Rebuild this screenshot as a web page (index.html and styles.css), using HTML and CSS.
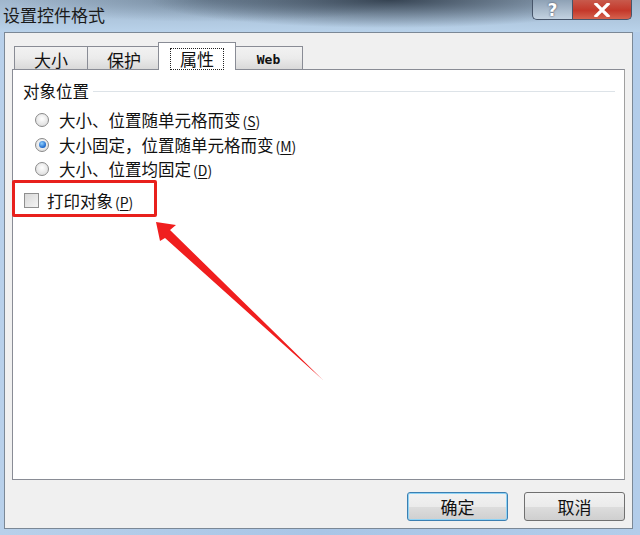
FILE: index.html
```html
<!DOCTYPE html>
<html lang="zh-CN">
<head>
    <meta charset="UTF-8">
    <title>设置控件格式</title>
    <link rel="stylesheet" href="styles.css">
</head>
<body>

<div class="window">
    <div class="titlebar">
        <span class="title">设置控件格式</span>
        <div class="caption-buttons">
            <button class="cap-btn help">?</button>
            <button class="cap-btn close">
                <svg width="18" height="14" viewBox="0 0 18 14">
                    <path d="M3 1 L15 13 M15 1 L3 13" stroke="#fff" stroke-width="3.2" stroke-linecap="square"/>
                </svg>
            </button>
        </div>
    </div>

    <div class="client">
        <div class="tabs">
            <div class="tab">大小</div>
            <div class="tab">保护</div>
            <div class="tab active"><span class="focus">属性</span></div>
            <div class="tab web">Web</div>
        </div>

        <div class="panel">
            <div class="group-title">
                <span>对象位置</span>
                <span class="group-line"></span>
            </div>

            <div class="options">
                <div class="option">
                    <span class="radio"></span>
                    <span>大小、位置随单元格而变<span class="key">(<u>S</u>)</span></span>
                </div>
                <div class="option">
                    <span class="radio checked"></span>
                    <span>大小固定，位置随单元格而变<span class="key">(<u>M</u>)</span></span>
                </div>
                <div class="option">
                    <span class="radio"></span>
                    <span>大小、位置均固定<span class="key">(<u>D</u>)</span></span>
                </div>
            </div>

            <div class="check-row">
                <span class="checkbox"></span>
                <span>打印对象<span class="key">(<u>P</u>)</span></span>
            </div>

            <!-- annotation drawn over the dialog -->
            <div class="highlight"></div>
            <svg class="arrow" width="200" height="200" viewBox="0 0 200 200">
                <path d="M1 1 L21 4 L15 9 L167 158 L168 159 L10 17 L5 20 Z" fill="#f01e1e"/>
            </svg>
        </div>

        <div class="buttons">
            <button class="btn default">确定</button>
            <button class="btn">取消</button>
        </div>
    </div>
</div>

</body>
</html>
```

FILE: styles.css
```css
body {
    margin: 0;
    font-family: "Noto Sans CJK SC", "Liberation Sans", sans-serif;
    background: #ffffff;
}
.window {
    width: 640px;
    height: 535px;
    background: linear-gradient(to right, #b8d0ea, #a9c5e6 50%, #b3cdea);
    overflow: hidden;
}
.titlebar {
    height: 32px;
    display: flex;
    justify-content: space-between;
    background:
        radial-gradient(ellipse 240px 28px at 390px 0px, rgba(36, 48, 62, 0.85), rgba(36, 48, 62, 0) 100%),
        radial-gradient(ellipse 200px 22px at 210px 0px, rgba(90, 110, 130, 0.6), rgba(90, 110, 130, 0) 100%),
        linear-gradient(to bottom, #a0b6cc, #b9d2ea);
}
.title {
    font-size: 17px;
    color: #1a1a1a;
    padding: 2px 0 0 3px;
    line-height: 26px;
}
.caption-buttons {
    display: flex;
    margin-right: 8px;
    height: 20px;
}
.cap-btn {
    height: 20px;
    border: 1px solid #47556a;
    border-top: none;
    padding: 0;
    display: flex;
    align-items: center;
    justify-content: center;
}
.help {
    width: 40px;
    border-radius: 0 0 0 5px;
    border-right: none;
    background: linear-gradient(to bottom, #8ea1b5, #c3d2e1);
    color: #fff;
    font-family: "DejaVu Sans", sans-serif;
    font-weight: bold;
    font-size: 17px;
    text-shadow: 0 0 2px #334;
}
.close {
    width: 60px;
    border-radius: 0 0 5px 0;
    background: linear-gradient(to bottom, #c85a4c, #c4382a 55%, #d5634f);
}
.client {
    margin-left: 4px;
    width: 629px;
    height: 497px;
    box-sizing: border-box;
    border: 1px solid #7b8896;
    background: #f0f0f0;
    padding: 9px 7px 0 7px;
}
.tabs {
    display: flex;
    align-items: flex-end;
    height: 28px;
    padding-left: 2px;
    margin-bottom: -1px;
    position: relative;
    z-index: 1;
}
.tab {
    width: 73px;
    height: 24px;
    box-sizing: border-box;
    border: 1px solid #898c95;
    border-right: none;
    background: linear-gradient(to bottom, #f2f2f2, #ebebeb 50%, #d9d9d9);
    font-size: 17px;
    line-height: 25px;
    text-align: center;
    color: #111;
}
.tab.web {
    width: 69px;
    border-right: 1px solid #898c95;
    font-family: "DejaVu Sans Mono", monospace;
    font-weight: bold;
    font-size: 13px;
}
.tab.active {
    width: 78px;
    height: 28px;
    margin: 0 -2px 0 -2px;
    border-right: 1px solid #898c95;
    border-bottom: none;
    background: #ffffff;
    padding-top: 3px;
    position: relative;
}
.focus {
    display: inline-block;
    border: 1px dotted #222;
    line-height: 20px;
    padding: 0 9px;
}
.panel {
    position: relative;
    height: 411px;
    box-sizing: border-box;
    border: 1px solid #898c95;
    border-right-color: #a0a0a0;
    background: #ffffff;
    padding: 10px 9px 0 10px;
    font-size: 16.5px;
    color: #111;
}
.group-title {
    display: flex;
    align-items: center;
    height: 22px;
}
.group-line {
    flex: 1;
    height: 0;
    border-top: 1px solid #dde3e8;
    margin-left: 4px;
}
.options {
    margin-top: 6px;
}
.option {
    display: flex;
    align-items: center;
    height: 24.5px;
    padding-left: 12px;
}
.radio {
    width: 14px;
    height: 14px;
    box-sizing: border-box;
    border-radius: 50%;
    border: 1px solid #8a8a8a;
    background: radial-gradient(circle at 50% 40%, #ffffff, #d6d6d6);
    margin-right: 10px;
    position: relative;
}
.radio.checked::after {
    content: "";
    position: absolute;
    left: 2.5px;
    top: 2.5px;
    width: 7px;
    height: 7px;
    border-radius: 50%;
    background: radial-gradient(circle at 40% 35%, #8fd0ff, #1b66c9 70%);
}
.key {
    font-size: 14px;
    margin-left: 2px;
}
.key u {
    text-underline-offset: 2px;
}
.check-row {
    display: flex;
    align-items: center;
    height: 30px;
    margin-top: 4px;
    padding-left: 1px;
}
.checkbox {
    width: 15px;
    height: 15px;
    box-sizing: border-box;
    border: 1px solid #8f8f8f;
    background: linear-gradient(135deg, #d8d8d8, #f4f4f4);
    margin-right: 8px;
}
.highlight {
    position: absolute;
    left: -1px;
    top: 110px;
    width: 145px;
    height: 37px;
    box-sizing: border-box;
    border: 3px solid #e8201c;
    border-radius: 2px;
}
.arrow {
    position: absolute;
    left: 142px;
    top: 151px;
}
.buttons {
    display: flex;
    justify-content: flex-end;
    gap: 16px;
    padding: 12px 0 0 0;
}
.btn {
    width: 101px;
    height: 29px;
    border: 1px solid #707070;
    border-radius: 3px;
    background: linear-gradient(to bottom, #f2f2f2, #ebebeb 50%, #dddddd 51%, #cfcfcf);
    font-family: "Noto Sans CJK SC", sans-serif;
    font-size: 17px;
    color: #111;
    padding: 0;
}
.btn.default {
    border-color: #3c7fb1;
    box-shadow: inset 0 0 0 1px #8fd3f5;
}
```
